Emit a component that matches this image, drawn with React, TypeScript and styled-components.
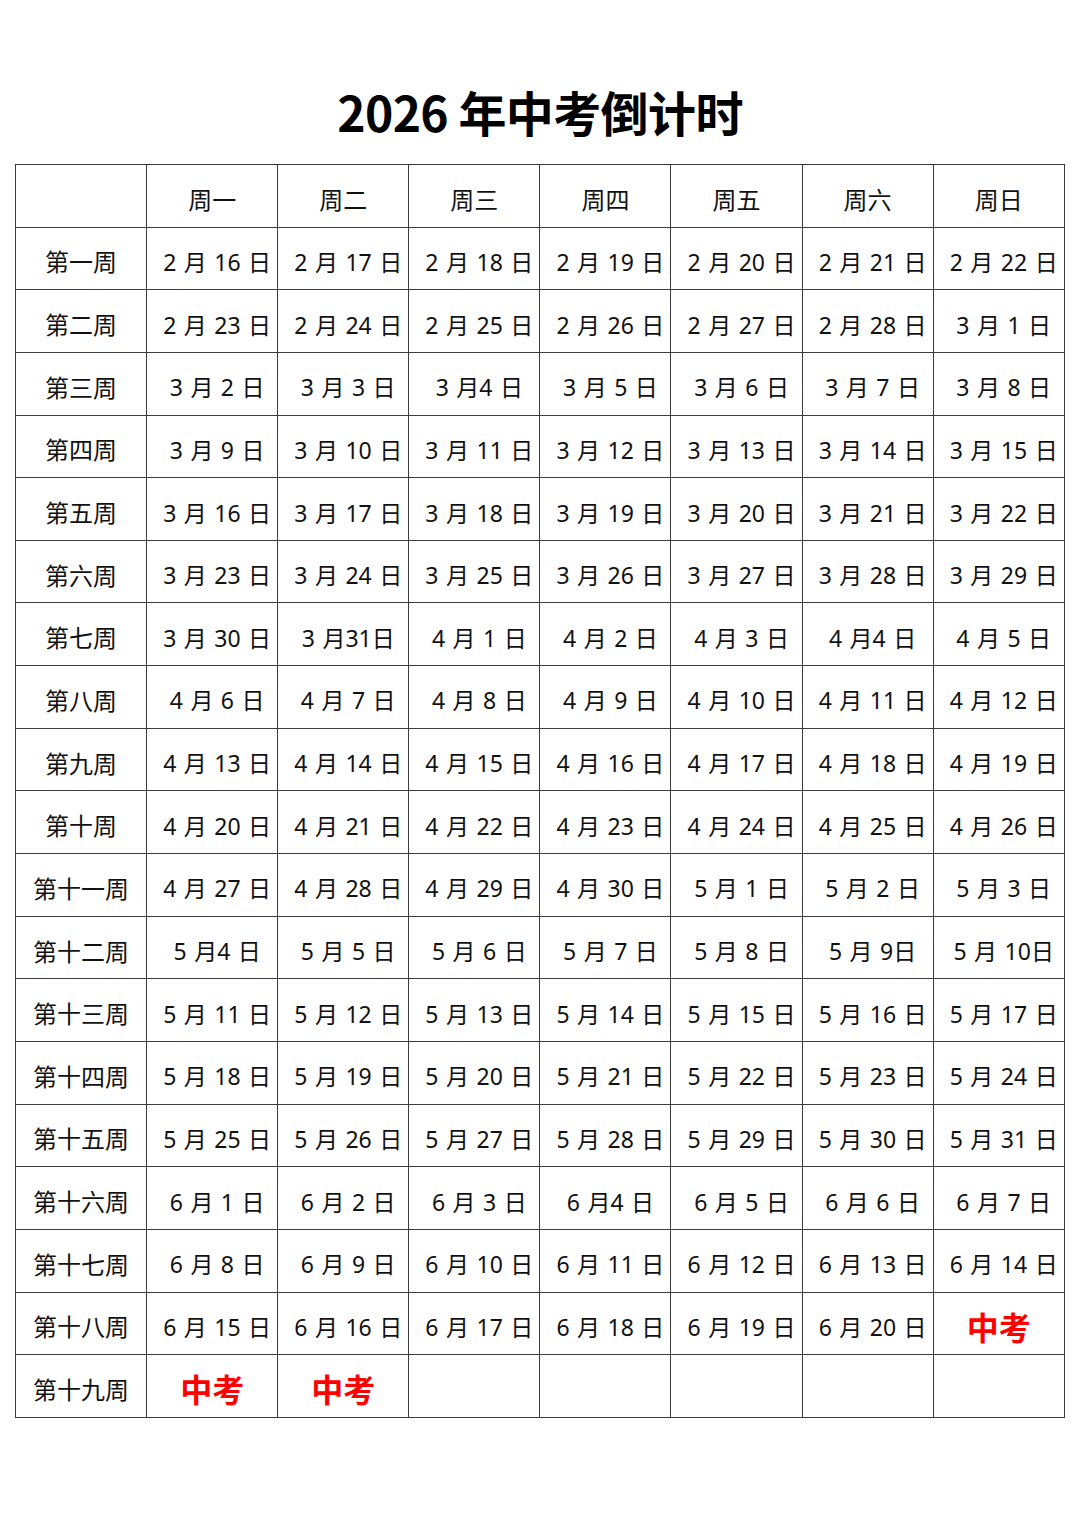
import styled, { createGlobalStyle } from 'styled-components';

const GlobalStyle = createGlobalStyle`
  html, body {
    margin: 0;
    padding: 0;
    background: #ffffff;
  }
  body {
    font-family: "Noto Sans", "Noto Sans CJK SC", sans-serif;
    color: #111;
  }
`;

const weekNames = [
  '第一周', '第二周', '第三周', '第四周', '第五周', '第六周', '第七周', '第八周', '第九周', '第十周',
  '第十一周', '第十二周', '第十三周', '第十四周', '第十五周', '第十六周', '第十七周', '第十八周', '第十九周',
];

const dayNames = ['周一', '周二', '周三', '周四', '周五', '周六', '周日'];

// a few cells in the source are typed without the usual spaces
const quirks: Record<string, string> = {
  '3-4': '3 月4 日',
  '3-31': '3 月31日',
  '4-4': '4 月4 日',
  '5-4': '5 月4 日',
  '5-9': '5 月 9日',
  '5-10': '5 月 10日',
  '6-4': '6 月4 日',
};

const monthDays: Record<number, number> = { 2: 28, 3: 31, 4: 30, 5: 31, 6: 30 };

type Cell = { text: string; exam?: boolean };

function buildRows(): Cell[][] {
  const rows: Cell[][] = [];
  let m = 2;
  let d = 16;
  for (let w = 0; w < 19; w++) {
    const row: Cell[] = [];
    for (let i = 0; i < 7; i++) {
      const isExam = m === 6 && d >= 21 && d <= 23;
      if (m === 6 && d > 23) {
        row.push({ text: '' });
      } else if (isExam) {
        row.push({ text: '中考', exam: true });
      } else {
        row.push({ text: quirks[`${m}-${d}`] ?? `${m} 月 ${d} 日` });
      }
      d++;
      if (d > monthDays[m]) {
        d = 1;
        m++;
      }
    }
    rows.push(row);
  }
  return rows;
}

export default function App() {
  const rows = buildRows();

  return (
    <Page>
      <GlobalStyle />
      <Title>2026 年中考倒计时</Title>
      <Table>
        <colgroup>
          {Array.from({ length: 8 }).map((_, i) => (
            <col key={i} />
          ))}
        </colgroup>
        <thead>
          <tr>
            <HeadCell />
            {dayNames.map(n => (
              <HeadCell key={n}>{n}</HeadCell>
            ))}
          </tr>
        </thead>
        <tbody>
          {rows.map((row, idx) => (
            <tr key={idx}>
              <WeekCell>{weekNames[idx]}</WeekCell>
              {row.map((c, j) => (
                <DateCell key={j} $exam={c.exam}>
                  {c.text}
                </DateCell>
              ))}
            </tr>
          ))}
        </tbody>
      </Table>
    </Page>
  );
}

const Page = styled.div`
  width: 1080px;
  height: 1528px;
  padding: 84px 15px 0 15px;
  box-sizing: border-box;
`;

const Title = styled.h1`
  margin: 0 0 26px 0;
  text-align: center;
  font-family: "Noto Sans CJK SC", sans-serif;
  font-weight: 700;
  font-size: 48px;
  line-height: 54px;
  color: #000;
  letter-spacing: -0.6px;
`;

const Table = styled.table`
  width: 1049px;
  table-layout: fixed;
  border-collapse: collapse;

  col {
    width: 131.1px;
  }

  tr {
    height: 62.65px;
  }
`;

const cellBase = `
  border: 1.5px solid #3c3c3c;
  padding: 5px 0 0 0;
  text-align: center;
  vertical-align: middle;
  white-space: nowrap;
  color: #111;
`;

const HeadCell = styled.th`
  ${cellBase}
  font-weight: 400;
  font-size: 24px;
  font-family: "Noto Sans CJK SC", sans-serif;
`;

const WeekCell = styled.td`
  ${cellBase}
  font-size: 24px;
  font-family: "Noto Sans CJK SC", sans-serif;
`;

const DateCell = styled.td<{ $exam?: boolean }>`
  ${cellBase}
  padding-left: ${p => (p.$exam ? '0' : '10px')};
  font-size: ${p => (p.$exam ? '32px' : '23px')};
  font-weight: ${p => (p.$exam ? 700 : 400)};
  word-spacing: 1.5px;
  color: ${p => (p.$exam ? '#ff0000' : '#111')};
  font-family: ${p => (p.$exam ? '"Noto Sans CJK SC", sans-serif' : '"Noto Sans", "Noto Sans CJK SC", sans-serif')};
`;
